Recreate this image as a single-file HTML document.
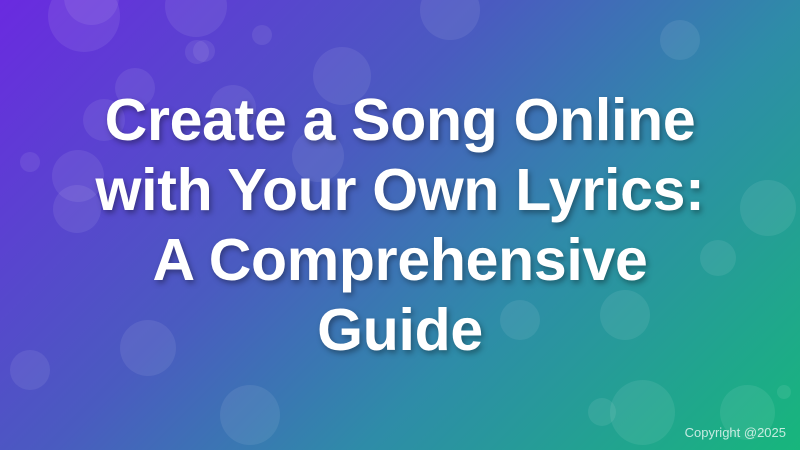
<!DOCTYPE html>
<html><head><meta charset="utf-8"><style>
html,body{margin:0;padding:0}
body{width:800px;height:450px;overflow:hidden;position:relative;
background:linear-gradient(135deg,#6a2ae0 0%,#4a5bc0 40%,#2e8ca8 65%,#17b67c 100%);
font-family:"Liberation Sans",sans-serif}
.c{position:absolute;border-radius:50%;background:rgba(255,255,255,0.08)}
h1{position:absolute;left:0;right:0;top:85px;margin:0;text-align:center;color:#fff;
font-size:59px;line-height:70px;font-weight:bold;letter-spacing:-0.3px;
text-shadow:2px 3px 6px rgba(0,0,0,0.35)}
.cp{position:absolute;right:14px;bottom:10px;color:rgba(255,255,255,0.75);font-size:13px}
</style></head><body>
<div class="c" style="left:48px;top:-20px;width:72px;height:72px"></div>
<div class="c" style="left:64px;top:-30px;width:55px;height:55px"></div>
<div class="c" style="left:165px;top:-25px;width:62px;height:62px"></div>
<div class="c" style="left:185px;top:40px;width:24px;height:24px"></div>
<div class="c" style="left:252px;top:25px;width:20px;height:20px"></div>
<div class="c" style="left:193px;top:40px;width:22px;height:22px"></div>
<div class="c" style="left:313px;top:47px;width:58px;height:58px"></div>
<div class="c" style="left:210px;top:85px;width:46px;height:46px"></div>
<div class="c" style="left:115px;top:68px;width:40px;height:40px"></div>
<div class="c" style="left:83px;top:99px;width:42px;height:42px"></div>
<div class="c" style="left:20px;top:152px;width:20px;height:20px"></div>
<div class="c" style="left:52px;top:150px;width:52px;height:52px"></div>
<div class="c" style="left:53px;top:185px;width:48px;height:48px"></div>
<div class="c" style="left:292px;top:130px;width:52px;height:52px"></div>
<div class="c" style="left:420px;top:-20px;width:60px;height:60px"></div>
<div class="c" style="left:660px;top:20px;width:40px;height:40px"></div>
<div class="c" style="left:740px;top:180px;width:56px;height:56px"></div>
<div class="c" style="left:700px;top:240px;width:36px;height:36px"></div>
<div class="c" style="left:600px;top:290px;width:50px;height:50px"></div>
<div class="c" style="left:10px;top:350px;width:40px;height:40px"></div>
<div class="c" style="left:120px;top:320px;width:56px;height:56px"></div>
<div class="c" style="left:220px;top:385px;width:60px;height:60px"></div>
<div class="c" style="left:610px;top:380px;width:65px;height:65px"></div>
<div class="c" style="left:588px;top:398px;width:28px;height:28px"></div>
<div class="c" style="left:720px;top:385px;width:55px;height:55px"></div>
<div class="c" style="left:777px;top:385px;width:14px;height:14px"></div>
<div class="c" style="left:500px;top:300px;width:40px;height:40px"></div>
<h1>Create a Song Online<br>with Your Own Lyrics:<br>A Comprehensive<br>Guide</h1>
<div class="cp">Copyright @2025</div>
</body></html>
